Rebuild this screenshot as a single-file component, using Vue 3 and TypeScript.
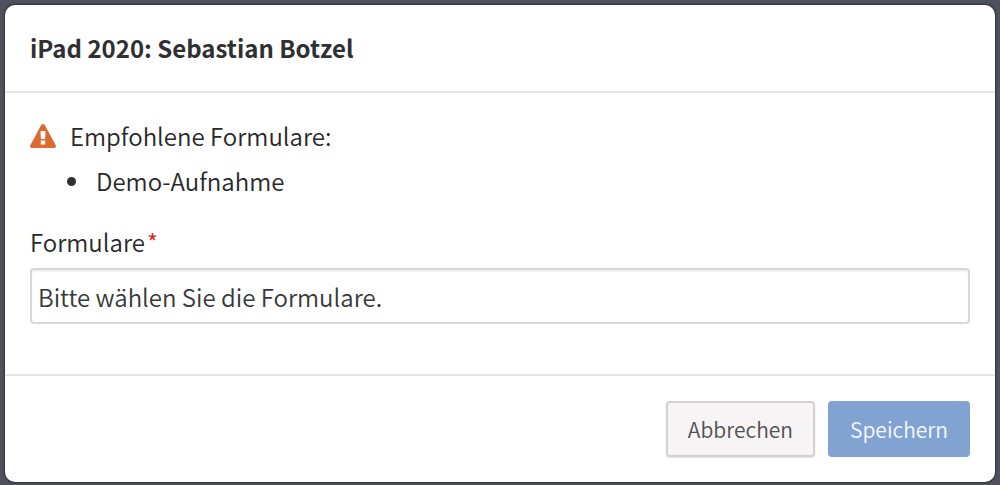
<script setup lang="ts">
import { ref } from 'vue'

const title = ref<string>('iPad 2020: Sebastian Botzel')
const recommended = ref<string[]>(['Demo-Aufnahme'])
const selection = ref<string>('')
</script>

<template>
  <div class="backdrop">
    <section class="modal" role="dialog" aria-labelledby="modal-title">
      <header class="modal-header">
        <h1 id="modal-title">{{ title }}</h1>
      </header>
      <div class="modal-body">
        <div class="hint">
          <svg class="warning" viewBox="0 0 26 25" aria-hidden="true">
            <path
              fill="#dd6b31"
              fill-rule="evenodd"
              d="M11.2 1.1Q11.8 0 13 0t1.8 1.1L25.7 21.200Q26.200 22.300 25.700 23.200 25.200 24 24 24H2Q.8 24 .3 23.200-.2 22.300.3 21.200ZM10.500 7l.4 8h4.200l.4-8ZM10.800 16.500v4h4.400v-4Z"
            />
          </svg>
          <p>Empfohlene Formulare:</p>
        </div>
        <ul class="recommended">
          <li v-for="name in recommended" :key="name">{{ name }}</li>
        </ul>
        <label class="field-label" for="forms">Formulare<span class="required">*</span></label>
        <input
          id="forms"
          v-model="selection"
          class="field"
          type="text"
          placeholder="Bitte wählen Sie die Formulare."
          required
        />
      </div>
      <footer class="modal-footer">
        <button type="button" class="button cancel">Abbrechen</button>
        <button type="button" class="button save">Speichern</button>
      </footer>
    </section>
  </div>
</template>

<style>
body {
  background: #50515f;
}
</style>

<style scoped>
.backdrop {
  padding: 5px 5px 3px;
  background: #50515f;
  color: #28282b;
  font-family: 'Noto Sans CJK SC', 'Noto Sans', sans-serif;
  font-size: 24px;
  font-weight: 350;
  line-height: 36px;
}

.modal {
  background: #fff;
  border-radius: 10px;
  box-shadow: 0 0 2px 1px #30313b;
}

.modal-header {
  padding: 25px;
  border-bottom: 2px solid #e5e5e5;
}

h1 {
  margin: 0;
  color: #303033;
  font-size: 24px;
  font-weight: 700;
}

.modal-body {
  padding: 25px 25px 50px;
}

.hint {
  display: flex;
  align-items: center;
  gap: 14px;
}

.hint p {
  margin: 0;
}

.warning {
  width: 26px;
  height: 25px;
}

.recommended {
  margin: 9px 0 25px;
  padding-left: 37px;
  list-style: none;
}

.recommended li {
  display: flex;
  align-items: center;
  gap: 20px;
}

.recommended li::before {
  content: '';
  width: 9px;
  height: 9px;
  border-radius: 50%;
  background: #303033;
}

.field-label {
  display: block;
  margin-bottom: 8px;
}

.required {
  margin-left: 2px;
  color: #d9281c;
}

.field {
  display: block;
  box-sizing: border-box;
  width: 100%;
  height: 56px;
  padding: 0 6px;
  border: 2px solid #d5d8da;
  border-radius: 4px;
  outline: none;
  background: #fff;
  box-shadow: inset 0 2px 2px #eef1f2;
  color: #38383a;
  font: inherit;
}

.field::placeholder {
  color: #38383a;
  opacity: 1;
}

.modal-footer {
  display: flex;
  justify-content: flex-end;
  gap: 13px;
  padding: 25px;
  border-top: 2px solid #e5e5e5;
}

.button {
  height: 56px;
  padding: 0 20px;
  border: 2px solid #d3d1d2;
  border-radius: 4px;
  font: inherit;
  font-size: 21px;
}

.cancel {
  background: #f7f4f6;
  box-shadow: 0 1px 2px #e3e3e3;
  color: #505050;
}

.save {
  border-color: #82a2d2;
  background: #82a2d2;
  color: #f4f8fd;
}
</style>
